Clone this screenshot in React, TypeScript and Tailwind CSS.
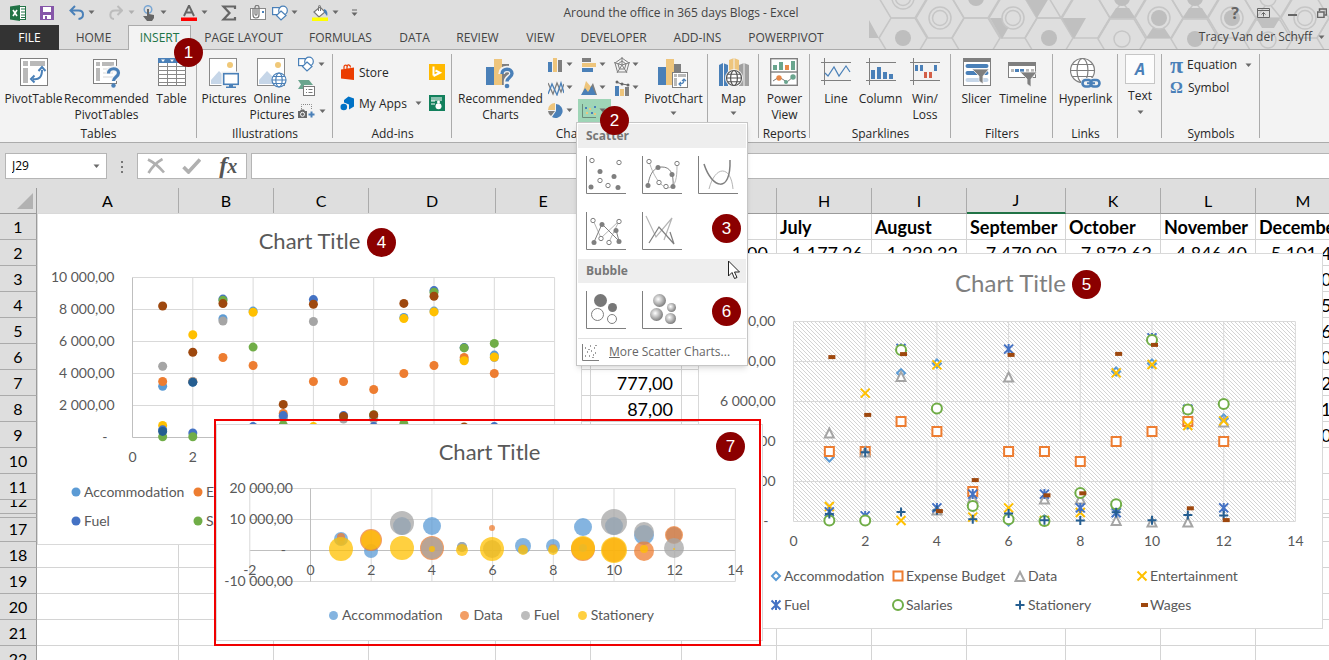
import React from 'react';

interface Series {
  name: string;
  color: string;
  shape: string;
  values: number[];
}

const series: Series[] = [
  { name: 'Accommodation', color: '#5b9bd5', shape: 'diamond', values: [3200, 3450, 7420, 7900, 1300, 0, 100, 1300, 7500, 7900, 4850, 5150] },
  { name: 'Expense Budget', color: '#ed7d31', shape: 'square', values: [3500, 3500, 5000, 4500, 1500, 3500, 3500, 3000, 4000, 4500, 5000, 4000] },
  { name: 'Data', color: '#a5a5a5', shape: 'triangle', values: [4450, 3500, 7280, 600, 1200, 7250, 1150, 1150, 80, 0, 0, 5000] },
  { name: 'Entertainment', color: '#ffc000', shape: 'cross', values: [750, 6420, 50, 7830, 220, 680, 50, 450, 7430, 7850, 4800, 5030] },
  { name: 'Fuel', color: '#4472c4', shape: 'star', values: [480, 280, 8650, 680, 1370, 8620, 1370, 680, 440, 9180, 5620, 680] },
  { name: 'Salaries', color: '#70ad47', shape: 'circle', values: [50, 50, 8580, 5650, 780, 110, 20, 1420, 860, 9080, 5600, 5880] },
  { name: 'Stationery', color: '#255e91', shape: 'plus', values: [380, 3460, 480, 560, 110, 400, 60, 50, 460, 60, 320, 300] },
  { name: 'Wages', color: '#9e480e', shape: 'dash', values: [8220, 5330, 8370, 520, 2070, 8330, 1310, 1410, 8380, 8830, 660, 70] },
];

// x, y and radius of every bubble, in plot pixels
const bubbles = [
  { name: 'Accommodation', color: '#5b9bd5', points: [[125, 115, 7], [155, 127, 7], [186, 102, 9], [216, 102, 9], [246, 123, 5], [307, 122, 8], [337, 122, 7], [367, 103, 9], [398, 102, 9], [428, 111, 10], [458, 111, 8]] },
  { name: 'Data', color: '#ed7d31', points: [[125, 113, 4], [155, 116, 11], [216, 124, 12], [276, 104, 3], [337, 124, 4], [367, 125, 12], [398, 126, 12], [428, 127, 10], [458, 111, 9]] },
  { name: 'Fuel', color: '#a5a5a5', points: [[125, 117, 4], [186, 99, 12], [216, 124, 11], [246, 123, 5], [276, 125, 9], [307, 124, 4], [337, 124, 4], [367, 124, 4], [398, 98, 13], [428, 108, 10], [458, 124, 10]] },
  { name: 'Stationery', color: '#ffc000', points: [[125, 125, 12], [155, 116, 10], [186, 124, 12], [216, 125, 3], [246, 126, 6], [276, 125, 12], [307, 126, 5], [337, 126, 5], [367, 124, 12], [398, 126, 13], [428, 125, 4], [458, 125, 1]] },
];

const tabs = [
  { name: 'FILE', cls: 'w-[59px] bg-[#333333] text-white' },
  { name: 'HOME', cls: 'w-[69px]' },
  { name: 'INSERT', cls: 'w-[63px] bg-[#f3f3f3] text-[#217346] border border-b-0 border-[#ababab]' },
  { name: 'PAGE LAYOUT', cls: 'w-[105px]' },
  { name: 'FORMULAS', cls: 'w-[89px]' },
  { name: 'DATA', cls: 'w-[59px]' },
  { name: 'REVIEW', cls: 'w-[67px]' },
  { name: 'VIEW', cls: 'w-[59px]' },
  { name: 'DEVELOPER', cls: 'w-[87px]' },
  { name: 'ADD-INS', cls: 'w-[81px]' },
  { name: 'POWERPIVOT', cls: 'w-[96px]' },
];

const columns = [
  { name: 'A', w: 142 }, { name: 'B', w: 95 }, { name: 'C', w: 95 }, { name: 'D', w: 127 },
  { name: 'E', w: 95 }, { name: 'F', w: 91 }, { name: 'G', w: 95 }, { name: 'H', w: 95 },
  { name: 'I', w: 95 }, { name: 'J', w: 99 }, { name: 'K', w: 95 }, { name: 'L', w: 95 }, { name: 'M', w: 95 },
];

const cells: Record<string, string> = {
  B1: 'January', C1: 'February', D1: 'March', E1: 'April', F1: 'May', G1: 'June', H1: 'July',
  I1: 'August', J1: 'September', K1: 'October', L1: 'November', M1: 'December',
  G2: '1 250,00', H2: '1 177,26', I2: '1 239,22', J2: '7 479,00', K2: '7 872,63', L2: '4 846,40', M2: '5 101,40',
  F7: '777,00', F8: '87,00',
  M3: '4 000,00', M4: '4 980,50', M5: '5 030,60', M6: '670,00', M7: '5 860,20', M8: '310,10', M9: '70,00',
};

const rows = ['1', '2', '3', '4', '5', '6', '7', '8', '9', '10', '11', '12', '', '17', '18', '19', '20', '21', '22'];

const rowHeight = (r: string) => {
  if (r === '12') return 'h-[13px]';
  if (r === '') return 'h-[3px]';
  if (r === '17') return 'h-[23px]';
  return 'h-[25px]';
};

const Arrow = ({ className = '' }: { className?: string }) => (
  <svg className={`w-[7px] h-[5px] shrink-0 ${className}`} viewBox="0 0 7 5"><path d="M0.5 0.5h6L3.5 4z" fill="#6a6a6a" /></svg>
);

const Badge = ({ n, className }: { n: number; className: string }) => (
  <span className={`absolute z-40 w-[29px] h-[29px] rounded-full bg-[#8b0000] text-white text-[17px] leading-[29px] text-center font-['Liberation_Sans',sans-serif] ${className}`}>{n}</span>
);

/* ---------- icons ---------- */

const ShapesIcon = () => (
  <svg className="w-4 h-4" viewBox="0 0 16 16" fill="#fff" stroke="#4a80b8" strokeWidth="1.2">
    <rect x="0.6" y="2.6" width="8" height="7" />
    <circle cx="11" cy="5.5" r="4.3" />
    <path d="M9 6l5 4.5-5 4.5-4.5-4.5z" />
  </svg>
);

const PivotTableIcon = () => (
  <svg width="28" height="28" viewBox="0 0 28 28">
    <rect x="0.5" y="0.5" width="27" height="27" fill="#fff" stroke="#7f7f7f" />
    <path d="M3 3h5v5H3zM10 3h15v5H10zM3 10h5v15H3z" fill="#b9b9b9" />
    <path d="M13 21c6 1 9-2 9-9" fill="none" stroke="#4a80b8" strokeWidth="2" />
    <path d="M18.500 13l3.500-4 3.500 4M14.500 17.500L11 21l3.500 3.500" fill="none" stroke="#4a80b8" strokeWidth="2" />
  </svg>
);

const RecPivotIcon = () => (
  <svg width="28" height="30" viewBox="0 0 28 30">
    <rect x="0.5" y="1.500" width="23" height="24" fill="#fff" stroke="#7f7f7f" />
    <path d="M3 4h4v4H3zM9 4h12v4H9zM3 10h4v13H3z" fill="#b9b9b9" />
    <path d="M10 11h10M10 15h10M10 19h10" stroke="#d5d5d5" />
    <path d="M15.500 15.500c0-7 10.500-6.500 10.500-.5 0 4-5 4-5 8" fill="none" stroke="#f3f3f3" strokeWidth="6" />
    <path d="M15.500 15.500c0-6.500 10-6 10-.5 0 4-5 4-5 8" fill="none" stroke="#4a80b8" strokeWidth="3.200" />
    <circle cx="20.500" cy="27.500" r="2.200" fill="#4a80b8" />
  </svg>
);

const TableIcon = () => (
  <svg width="28" height="28" viewBox="0 0 28 28">
    <rect x="0.5" y="0.5" width="27" height="27" fill="#fff" stroke="#7f7f7f" />
    <path d="M0 0h28v5H0z" fill="#4a80b8" />
    <path d="M3 1.500h4L5 4zM12 1.500h4L14 4zM21 1.500h4L23 4z" fill="#fff" />
    <path d="M0 8.500h28M0 12.500h28M0 16.500h28M0 20.500h28M0 24.500h28M9.500 5v23M18.500 5v23" stroke="#8a8a8a" />
  </svg>
);

const PictureBase = () => (
  <>
    <rect x="0.5" y="0.5" width="27" height="27" fill="#fff" stroke="#8a8a8a" />
    <circle cx="21" cy="7" r="3" fill="#f0c878" />
    <path d="M2 26V22l8-9 9 9v4z" fill="#c6d6e8" />
  </>
);

const PicturesIcon = () => (
  <svg width="30" height="30" viewBox="0 0 30 30">
    <PictureBase />
    <rect x="14" y="15" width="15.500" height="11.500" fill="#fff" stroke="#f3f3f3" strokeWidth="3" />
    <rect x="14.700" y="15.700" width="14.600" height="10.600" fill="#fff" stroke="#4a80b8" strokeWidth="1.600" />
    <path d="M20 27h4v1.500h3V30H17v-1.500h3z" fill="#4a80b8" />
  </svg>
);

const Globe = ({ cx, cy, r, color }: { cx: number; cy: number; r: number; color: string }) => (
  <g fill="none" stroke={color} strokeWidth="1.200">
    <circle cx={cx} cy={cy} r={r} fill="#fff" />
    <ellipse cx={cx} cy={cy} rx={r / 2.200} ry={r} />
    <path d={`M${cx - r} ${cy}h${2 * r}M${cx - r * 0.85} ${cy - r / 2}h${r * 1.7}M${cx - r * 0.85} ${cy + r / 2}h${r * 1.7}`} />
  </g>
);

const OnlineIcon = () => (
  <svg width="30" height="30" viewBox="0 0 30 30">
    <PictureBase />
    <Globe cx={22} cy={22} r={7} color="#4a80b8" />
  </svg>
);

const SmartArtIcon = () => (
  <svg width="17" height="17" viewBox="0 0 17 17">
    <path d="M0 1h11l4 5h-9v4H0l3-4.500z" fill="#6aa58e" />
    <rect x="5.500" y="7.500" width="11" height="9" fill="#fff" stroke="#7a7a7a" />
    <path d="M8 10.500h1M10.500 10.500h4M8 13.500h1M10.500 13.500h4" stroke="#7a7a7a" />
  </svg>
);

const ScreenshotIcon = () => (
  <svg width="17" height="16" viewBox="0 0 17 16">
    <path d="M3.500 6V1.500h10V7" fill="none" stroke="#888" strokeDasharray="1 1" />
    <path d="M0 8h2l1-1.500h3L7 8h2v7H0z" fill="#6a6a6a" />
    <circle cx="4.500" cy="11.300" r="2" fill="none" stroke="#fff" />
    <path d="M13.500 8.500v6M10.500 11.500h6" stroke="#4a80b8" strokeWidth="2" />
  </svg>
);

const StoreIcon = () => (
  <svg width="15" height="17" viewBox="0 0 15 17">
    <path d="M1 5.500L14 3.500V16L1 14.500z" fill="#eb3c00" />
    <path d="M4 5V3c0-2.500 3-2.500 3.500 0M7 5V2.500c0-2.500 3.500-2 3.500 1" fill="none" stroke="#eb3c00" strokeWidth="1.200" />
  </svg>
);

const AppsIcon = () => (
  <svg width="15" height="15" viewBox="0 0 15 15">
    <path d="M4 4l4.500-3.500L14 2.500v8L9 13.500V8.500L4 6.500z" fill="#0072c6" />
    <circle cx="3.800" cy="11" r="3.300" fill="#0072c6" />
  </svg>
);

const BingIcon = () => (
  <svg width="16" height="16" viewBox="0 0 16 16">
    <path d="M0 0h16v16H0z" fill="#ffb900" />
    <path d="M4.500 2.500v9M4.500 12l6.500-3.300L6.500 6.500" fill="none" stroke="#fff" strokeWidth="2" />
  </svg>
);

const PeopleGraphIcon = () => (
  <svg width="16" height="16" viewBox="0 0 16 16">
    <path d="M0 0h16v16H0z" fill="#12805c" />
    <path d="M2 3h11M2 6h4M2 9h4M2 5h11" stroke="#fff" />
    <circle cx="9.500" cy="7" r="1.500" fill="#fff" />
    <circle cx="9.500" cy="11.300" r="3" fill="#fff" />
  </svg>
);

const Bars = () => (
  <>
    <path d="M0 9h8v18H0z" fill="#4a80b8" />
    <path d="M8 1h8v26H8z" fill="#eec57c" />
    <path d="M16 6h7v21h-7z" fill="#7f7f7f" />
  </>
);

const RecChartsIcon = () => (
  <svg width="30" height="31" viewBox="0 0 30 31">
    <Bars />
    <path d="M15.500 16c0-7 11-6.500 11-.5 0 4-5.500 4-5.500 8v5" fill="none" stroke="#f3f3f3" strokeWidth="6.500" />
    <path d="M16 16c0-6.500 10-6 10-.5 0 4-5 4-5 8" fill="none" stroke="#4a80b8" strokeWidth="3.400" />
    <circle cx="21" cy="28" r="2.300" fill="#4a80b8" />
  </svg>
);

const PivotChartIcon = () => (
  <svg width="31" height="31" viewBox="0 0 31 31">
    <Bars />
    <rect x="14.500" y="14.500" width="15" height="15" fill="#fff" stroke="#7f7f7f" />
    <path d="M16 16h3v3h-3zM20 16h8v3h-8zM16 20h3v8h-3z" fill="#b9b9b9" />
    <path d="M21.500 26c3 0 4.500-1 4.500-4M24 23l2-2 2 2M23 24l-2 2 2 2" fill="none" stroke="#4a80b8" strokeWidth="1.200" />
  </svg>
);

const MapIcon = () => (
  <svg width="30" height="29" viewBox="0 0 30 29">
    <path d="M0 7l4-2 5 2v21H0z" fill="#4a80b8" />
    <path d="M10 2l5-2 5 2v20H10z" fill="#eec57c" />
    <path d="M20 7l5-2 5 2v21H20z" fill="#a0a0a0" />
    <path d="M4.500 5v23M25 5v23M15 0v12" stroke="#f3f3f3" />
    <circle cx="15" cy="20" r="9" fill="#f3f3f3" />
    <Globe cx={15} cy={20} r={7.5} color="#555" />
  </svg>
);

const PowerViewIcon = () => (
  <svg width="28" height="28" viewBox="0 0 28 28">
    <rect x="0.700" y="0.700" width="26.600" height="26.600" fill="#fff" stroke="#7f7f7f" strokeWidth="1.400" />
    <path d="M0 14h28" stroke="#7f7f7f" strokeWidth="1.400" />
    <path d="M3 7h4v5H3zM9 4h4v8H9zM21 3h4v9h-4z" fill="#6aa58e" />
    <path d="M15 7h4v5h-4z" fill="#e8894a" />
    <path d="M3 23l6-4 8 5 6-5" fill="none" stroke="#777" />
    <circle cx="9" cy="20" r="2.700" fill="#e8894a" />
    <circle cx="16" cy="24" r="2" fill="#6aa58e" />
    <circle cx="23" cy="19" r="2.700" fill="#6aa58e" />
  </svg>
);

const SparkAxes = () => <path d="M0 4.500h30M0 22.500h30M3.500 0v27" stroke="#7f7f7f" fill="none" />;

const LineIcon = () => (
  <svg width="30" height="27" viewBox="0 0 30 27">
    <SparkAxes />
    <path d="M4 15l3 3 6-9 5 9 7-10 4 6" fill="none" stroke="#4a80b8" strokeWidth="1.200" />
  </svg>
);

const ColumnIcon = () => (
  <svg width="30" height="27" viewBox="0 0 30 27">
    <SparkAxes />
    <path d="M5 12h4v9H5zM11 9h4v12h-4zM17 14h4v7h-4zM23 16h4v5h-4z" fill="#4a80b8" />
  </svg>
);

const WinLossIcon = () => (
  <svg width="30" height="27" viewBox="0 0 30 27">
    <SparkAxes />
    <path d="M5 7h3v6H5zM10 7h3v6h-3zM24 7h3v6h-3z" fill="#4a80b8" />
    <path d="M14 14h3v6h-3zM19 14h3v6h-3z" fill="#d35f48" />
  </svg>
);

const Funnel = ({ x, y }: { x: number; y: number }) => (
  <path d={`M${x} ${y}h17l-6 7v8l-4-3v-5z`} fill="#7f7f7f" stroke="#f3f3f3" strokeWidth="0.800" />
);

const SlicerIcon = () => (
  <svg width="28" height="28" viewBox="0 0 28 28">
    <rect x="0.500" y="0.500" width="27" height="27" fill="#fff" stroke="#7f7f7f" />
    <path d="M0 0h28v4H0z" fill="#7f7f7f" />
    <path d="M4.500 8h19M4.500 15h19" stroke="#4a80b8" strokeWidth="4" strokeLinecap="round" />
    <path d="M4.500 22h19" stroke="#c6d6e8" strokeWidth="4" strokeLinecap="round" />
    <Funnel x={9} y={11} />
  </svg>
);

const TimelineIcon = () => (
  <svg width="30" height="30" viewBox="0 0 30 30">
    <rect x="0.500" y="4.500" width="27" height="15" fill="#fff" stroke="#7f7f7f" />
    <path d="M0 4h28v4H0z" fill="#7f7f7f" />
    <path d="M3 12.500h3M18 12.500h3M23 12.500h3" stroke="#b9b9b9" strokeWidth="3" />
    <path d="M7 12.500h4M12 12.500h4" stroke="#4a80b8" strokeWidth="3" />
    <Funnel x={12} y={14} />
  </svg>
);

const HyperlinkIcon = () => (
  <svg width="31" height="31" viewBox="0 0 31 31">
    <Globe cx={12.5} cy={12.5} r={12} color="#7f7f7f" />
    <rect x="11" y="20" width="20" height="11" fill="#f3f3f3" />
    <rect x="12.500" y="22" width="9" height="6.500" rx="3.200" fill="none" stroke="#4a80b8" strokeWidth="2.600" />
    <rect x="20.500" y="22" width="9" height="6.500" rx="3.200" fill="none" stroke="#4a80b8" strokeWidth="2.600" />
    <path d="M17 25.200h8" stroke="#4a80b8" strokeWidth="2" />
  </svg>
);

const chartIcons = [
  <g key="col"><path d="M0 5h4v10H0z" fill="#4a80b8" /><path d="M5 1h4v14H5z" fill="#eec57c" /><path d="M10 3h4v12h-4z" fill="#7f7f7f" /></g>,
  <g key="bar"><path d="M1 1h9v4H1z" fill="#7f7f7f" /><path d="M1 6h14v4H1z" fill="#eec57c" /><path d="M1 11h11v4H1z" fill="#4a80b8" /></g>,
  <g key="radar" fill="none" stroke="#7f7f7f"><path d="M8 1l7 5-2.500 9h-9L1 6z" /><path d="M8 4l4 3-1.500 5h-5L4 7z" /><path d="M8 0v8L0 5.500M8 8l8-2.500M8 8l-5 8M8 8l5 8" /></g>,
  <g key="line" fill="none" strokeWidth="1.300"><path d="M0 3l5 11 4-11 4 9 3-8" stroke="#7f7f7f" /><path d="M0 14l4-10 5 11 4-12 3 10" stroke="#4a80b8" /></g>,
  <g key="area"><path d="M1 15l4-14 6 7 4 7z" fill="#eec57c" /><path d="M9 8l3-5 4 12h-5z" fill="#7f7f7f" /><path d="M0 15l4-7 3 4 4-6 4 9z" fill="#4a80b8" /></g>,
  <g key="combo"><path d="M1 6h4v10H1z" fill="#4a80b8" /><path d="M6 9h4v7H6z" fill="#eec57c" /><path d="M11 7h4v9h-4z" fill="#7f7f7f" /><path d="M2 2l6 2 6 1" fill="none" stroke="#666" /><circle cx="3" cy="2" r="1.500" fill="#666" /><circle cx="8" cy="4" r="1.500" fill="#666" /><circle cx="14" cy="5" r="1.500" fill="#666" /></g>,
  <g key="pie"><path d="M7 7V0a7 7 0 0 0-7 7z" fill="#eec57c" /><path d="M8 8V1a7 7 0 1 1-4 13z" fill="#4a80b8" /><path d="M7 8H0a7 7 0 0 0 3 5z" fill="#7f7f7f" /></g>,
  <g key="scatter"><path d="M1.500 1v13.500H15" fill="none" stroke="#6a8c7a" /><path d="M4 4h2v2H4zM10 9h2v2h-2zM13 3h2v2h-2z" fill="#4a80b8" /><path d="M8 5h2v2H8zM5 9h2v2H5zM13 10h2v2h-2z" fill="#eec57c" /></g>,
];

/* ---------- ribbon ---------- */

interface BigButtonProps {
  label: string;
  icon: React.ReactNode;
  className?: string;
  arrow?: boolean;
}

const BigButton = ({ label, icon, className = '', arrow }: BigButtonProps) => (
  <button className={`flex flex-col items-center shrink-0 ${className}`}>
    <span className="h-[33px] flex items-start justify-center">{icon}</span>
    <span className="leading-4 text-center whitespace-pre">{label}</span>
    {arrow && <Arrow className="mt-1" />}
  </button>
);

const Group = ({ label, className, children }: { label: string; className: string; children: React.ReactNode }) => (
  <section className={`flex flex-col shrink-0 relative ${className}`}>
    <div className="flex-1 flex justify-center items-start pt-2">{children}</div>
    <div className="h-4 leading-4 text-center">{label}</div>
    <span className="absolute right-0 top-1 bottom-1 w-px bg-[#ababab]" />
  </section>
);

const Ribbon = () => (
  <div className="flex h-[93px] bg-[#f3f3f3] border-b border-[#ababab] text-xs text-[#262626] overflow-hidden">
    <Group label="Tables" className="w-[197px]">
      <BigButton label="PivotTable" icon={<PivotTableIcon />} className="w-[60px]" />
      <BigButton label={'Recommended\nPivotTables'} icon={<RecPivotIcon />} className="w-[86px]" />
      <BigButton label="Table" icon={<TableIcon />} className="w-[44px]" />
    </Group>
    <Group label="Illustrations" className="w-[136px]">
      <BigButton label="Pictures" icon={<PicturesIcon />} className="w-[48px]" />
      <BigButton label={'Online\nPictures'} icon={<OnlineIcon />} className="w-[48px]" />
      <div className="flex flex-col gap-[7px] -mt-2 pt-1.5 pl-0.5 pr-1">
        <button aria-label="Shapes" className="flex items-center gap-1"><ShapesIcon /><Arrow /></button>
        <button aria-label="SmartArt"><SmartArtIcon /></button>
        <button aria-label="Screenshot" className="flex items-center gap-1"><ScreenshotIcon /><Arrow /></button>
      </div>
    </Group>
    <Group label="Add-ins" className="w-[119px]">
      <div className="flex flex-col gap-[14px] w-[89px] pt-1.5">
        <button className="flex items-center gap-1 h-[17px]"><StoreIcon />Store</button>
        <button className="flex items-center gap-1 h-[17px]"><AppsIcon />My Apps<Arrow className="ml-1" /></button>
      </div>
      <div className="flex flex-col gap-[15px] pt-1.5">
        <button aria-label="Bing Maps"><BingIcon /></button>
        <button aria-label="People Graph"><PeopleGraphIcon /></button>
      </div>
    </Group>
    <Group label="Charts" className="w-[256px] [&>div:nth-child(2)]:pr-3">
      <BigButton label={'Recommended\nCharts'} icon={<RecChartsIcon />} className="w-[88px]" />
      <div className="grid grid-cols-[33px_33px_33px] auto-rows-[23px] -mt-[5px]">
        {chartIcons.map((icon, i) => (
          <button key={i} aria-label="Insert chart" className={`flex items-center gap-0.5 pl-[3px] ${i === 7 ? 'bg-[#9fd5b7]' : ''}`}>
            <svg width="16" height="16" viewBox="0 0 16 16">{icon}</svg>
            <Arrow />
          </button>
        ))}
      </div>
      <BigButton label="PivotChart" icon={<PivotChartIcon />} className="w-[60px]" arrow />
    </Group>
    <Group label="Tours" className="w-[51px] [&>div:nth-child(2)]:pr-1">
      <BigButton label="Map" icon={<MapIcon />} arrow />
    </Group>
    <Group label="Reports" className="w-[51px]">
      <BigButton label={'Power\nView'} icon={<PowerViewIcon />} />
    </Group>
    <Group label="Sparklines" className="w-[141px]">
      <BigButton label="Line" icon={<LineIcon />} className="w-[42px]" />
      <BigButton label="Column" icon={<ColumnIcon />} className="w-[47px]" />
      <BigButton label={'Win/\nLoss'} icon={<WinLossIcon />} className="w-[42px]" />
    </Group>
    <Group label="Filters" className="w-[102px]">
      <BigButton label="Slicer" icon={<SlicerIcon />} className="w-[42px]" />
      <BigButton label="Timeline" icon={<TimelineIcon />} className="w-[51px]" />
    </Group>
    <Group label="Links" className="w-[65px]">
      <BigButton label="Hyperlink" icon={<HyperlinkIcon />} />
    </Group>
    <Group label="" className="w-[44px]">
      <button className="flex flex-col items-center gap-1 -mt-1">
        <span className="w-[30px] h-[30px] bg-[#fcfcfc] border border-[#c6c6c6] text-[#4a80b8] text-base font-bold italic leading-7">A</span>
        <span className="leading-4">Text</span>
        <Arrow className="mt-0.5" />
      </button>
    </Group>
    <Group label="Symbols" className="w-[98px]">
      <div className="flex flex-col gap-[3px] w-[82px] -mt-[3px]">
        <button className="flex items-center h-5 whitespace-nowrap"><span className="w-[18px] text-left text-2xl leading-5 font-bold text-[#4a80b8] font-['Liberation_Serif',serif]">π</span>Equation<Arrow className="ml-2" /></button>
        <button className="flex items-center h-5"><span className="w-[18px] text-left text-base leading-5 font-bold text-[#4a80b8] font-['Liberation_Serif',serif]">Ω</span>Symbol</button>
      </div>
    </Group>
  </div>
);

/* ---------- title bar ---------- */

// honeycomb cells, [centre x, centre y, kind]
const nodes: [number, number, string][] = [
  [903, 38, 'solid'], [940, 18, 'ring'], [903, -2, 'ring'], [976, -2, 'solid'], [976, 38, 'none'],
  [1013, 18, 'ring'], [1049, -2, 'none'], [1049, 38, 'solid'], [1086, 18, 'none'], [1122, -2, 'solid'],
  [1122, 39, 'open'], [1159, 18, 'both'], [1195, -2, 'solid'], [1195, 39, 'solid'], [1232, 18, 'both'],
  [1268, -2, 'open'], [1268, 40, 'open'], [1305, 18, 'ring'], [1341, 38, 'none'],
];

const Circuit = () => (
  <svg className="absolute right-0 top-0 w-[460px] h-[49px]" viewBox="869 0 460 49" fill="none" stroke="#c6c6c6" strokeWidth="1.500">
    {nodes.map(([x, y]) => (
      <path key={`${x},${y}`} d={`M${x - 24} ${y}l12-20h24l12 20-12 20h-24z`} />
    ))}
    <path d="M1061 18l-12-20M1110 18l12-16 13 16M1183 18l12-16 13 16M1256 18l12-16 13 16M1098 38l12-20M1037 18h24" />
    <path d="M990 18h24l-12 21zM1062 18h24l-12 21zM1025 -2h24l-12 20zM1116 8h13l6 10h-25zM1189 8h13l6 10h-25zM1262 28l12 0 6-10h-24zM1146 38h25l-8-12h-9zM869 20l10 18h-10z" fill="#c0c0c0" stroke="none" />
    {nodes.filter((n) => n[2] !== 'none').map(([x, y, kind]) => (
      <g key={`${x},${y}`}>
        {kind !== 'solid' && <circle cx={x} cy={y} r={kind === 'open' ? 8 : 11} fill="#dedede" />}
        {kind === 'ring' && <circle cx={x} cy={y} r="7.500" />}
        {(kind === 'solid' || kind === 'both') && <circle cx={x} cy={y} r="8" fill="#bebebe" stroke="none" />}
      </g>
    ))}
  </svg>
);

const QuickAccess = () => (
  <div className="flex items-center w-[365px] shrink-0">
    <svg className="ml-[10px] w-4 h-4" viewBox="0 0 16 16">
      <rect x="8.500" y="1.500" width="7" height="13" fill="#fff" stroke="#217346" />
      <path d="M11 4h4M11 7h4M11 10h4M11 12.500h4" stroke="#217346" />
      <path d="M0 1.500L10 0v16L0 14.500z" fill="#217346" />
      <path d="M3 5l4 6M7 5l-4 6" stroke="#fff" strokeWidth="1.600" />
    </svg>
    <button aria-label="Save" className="ml-[14px]">
      <svg className="w-[14px] h-[14px]" viewBox="0 0 14 14"><path d="M0 0h14v14H0z" fill="#8656a9" /><path d="M3 1h8v5H3zM3 9h8v4H3z" fill="#fff" /><path d="M5 10h2v3H5z" fill="#8656a9" /></svg>
    </button>
    <button aria-label="Undo" className="ml-[15px]">
      <svg className="w-4 h-4" viewBox="0 0 16 16" fill="none" stroke="#4a80b8" strokeWidth="2"><path d="M6 1L1.500 5.500 6 10M1.500 5.500h8c6 0 6 8 0 8.500" /></svg>
    </button>
    <Arrow className="ml-[3px]" />
    <button aria-label="Redo" className="ml-[14px]">
      <svg className="w-[14px] h-4" viewBox="0 0 14 16" fill="none" stroke="#bcbcbc" strokeWidth="2"><path d="M8.500 1L13 5.500 8.500 10M13 5.500H6c-6 0-6 8-1 8.500" /></svg>
    </button>
    <Arrow className="ml-[5px] opacity-40" />
    <button aria-label="Touch mode" className="ml-[7px]">
      <svg className="w-[14px] h-4" viewBox="0 0 14 16"><circle cx="6" cy="4.500" r="3.800" fill="none" stroke="#7aa7d4" strokeWidth="1.500" /><path d="M5 4h2v5l5 1v3l-2 3H5l-4-5h4z" fill="#666" /></svg>
    </button>
    <Arrow className="ml-1" />
    <button aria-label="Font color" className="ml-[14px]">
      <svg className="w-4 h-4" viewBox="0 0 16 16"><path d="M3 11L8 0.500 13 11M5 7.500h6" fill="none" stroke="#666" strokeWidth="1.900" /><path d="M0 12.500h16v3.500H0z" fill="#f00" /></svg>
    </button>
    <Arrow className="ml-1" />
    <button aria-label="AutoSum" className="ml-[13px]">
      <svg className="w-4 h-4" viewBox="0 0 16 16"><path d="M14 4V1.500H2.500L8.500 8l-6 6.500H14V12" fill="none" stroke="#666" strokeWidth="2.200" /></svg>
    </button>
    <button aria-label="Attach file" className="ml-[13px]">
      <svg className="w-4 h-4" viewBox="0 0 16 16"><rect x="0.500" y="3.500" width="15" height="11" fill="#fff" stroke="#888" /><path d="M3 3v7c0 4 6 4 6 0V2.500c0-3-4-3-4 0V9c0 1.500 2 1.500 2 0V4" fill="none" stroke="#777" strokeWidth="1.200" /><path d="M12 6h2v2h-2z" fill="#4a80b8" /></svg>
    </button>
    <button aria-label="Shapes" className="ml-1.5"><ShapesIcon /></button>
    <Arrow className="ml-[3px]" />
    <button aria-label="Fill color" className="ml-[14px]">
      <svg className="w-4 h-4" viewBox="0 0 16 16"><path d="M2 7l6-5 5 5-6 5z" fill="#fff" stroke="#777" strokeWidth="1.200" /><path d="M6.500 6V1.500c0-1.500 2-1.500 2 0V6" fill="none" stroke="#777" /><path d="M12 4c3 1 4 4 3 7l-3-4z" fill="#4a80b8" /><path d="M0 12.500h16v3.500H0z" fill="#ff0" /></svg>
    </button>
    <Arrow className="ml-1" />
    <svg className="ml-3 w-[7px] h-2 shrink-0" viewBox="0 0 7 8"><path d="M1 1h5" stroke="#666" /><path d="M0.500 3.500h6L3.500 7z" fill="#666" /></svg>
  </div>
);

const TitleBar = () => (
  <header className="relative bg-[#dedede] text-xs text-[#444444]">
    <Circuit />
    <div className="relative flex h-[25px] items-center">
      <QuickAccess />
      <h1 className="flex-1 text-center whitespace-nowrap">Around the office in 365 days Blogs - Excel</h1>
      <div className="w-[332px] shrink-0 flex justify-end items-center text-[#666]">
        <button className="text-base leading-5 font-bold mr-[18px]">?</button>
        <button aria-label="Ribbon display options" className="mr-[18px]">
          <svg width="13" height="10" viewBox="0 0 13 10" fill="none" stroke="#666"><path d="M0.500 0.500h12v9H0.500zM0.500 2.500h12M6.500 8.500v-4M4.500 6.500l2-2 2 2" /></svg>
        </button>
        <button aria-label="Minimize" className="mr-[20px]">
          <svg width="9" height="10" viewBox="0 0 9 10"><path d="M0 7h9" stroke="#666" strokeWidth="2" /></svg>
        </button>
        <button aria-label="Restore" className="mr-0.5">
          <svg width="10" height="10" viewBox="0 0 10 10" fill="none" stroke="#666"><path d="M2.500 3V1h7v6H7.500" strokeWidth="1.500" /><path d="M0.500 4h6.500v5.500H0.500z" strokeWidth="1.500" /></svg>
        </button>
      </div>
    </div>
    <nav className="relative flex h-[25px] border-b border-[#ababab]">
      {tabs.map((tab) => (
        <button key={tab.name} className={`h-[25px] leading-6 text-center shrink-0 ${tab.cls}`}>{tab.name}</button>
      ))}
      <button className="ml-auto flex items-center gap-1.5 pr-1 whitespace-nowrap">Tracy Van der Schyff<Arrow /></button>
    </nav>
  </header>
);

const FormulaBar = () => (
  <div className="flex items-start gap-1 h-[45px] pt-[10px] pl-[5px] bg-[#dedede] text-xs">
    <div className="flex items-center justify-between w-[102px] h-[26px] bg-white border border-[#b5b5b5] pl-1.5 pr-[6px]">
      <input aria-label="Name box" defaultValue="J29" className="w-14 text-black outline-none" />
      <Arrow />
    </div>
    <svg className="mx-[5px] mt-2 w-3 h-3" viewBox="0 0 12 12" fill="#777"><path d="M5 0h2v2H5zM5 5h2v2H5zM5 10h2v2H5z" /></svg>
    <div className="flex items-center justify-around w-[110px] h-[26px] bg-white border border-[#b5b5b5]">
      <button aria-label="Cancel"><svg width="18" height="16" viewBox="0 0 18 16"><path d="M1 1.500c6 3 11 7 16 13M15.500 1C10 4 5 9 1.500 15" fill="none" stroke="#b0b0b0" strokeWidth="2.600" /></svg></button>
      <button aria-label="Enter"><svg width="19" height="16" viewBox="0 0 19 16"><path d="M1.500 9l5 5L18 1.500" fill="none" stroke="#b0b0b0" strokeWidth="3.600" /></svg></button>
      <button className="text-2xl leading-6 italic font-bold text-[#555] font-['Liberation_Serif',serif]">f<span className="text-xl">x</span></button>
    </div>
    <input aria-label="Formula" className="flex-1 h-[26px] bg-white border border-r-0 border-[#b5b5b5] outline-none" />
  </div>
);

/* ---------- charts ---------- */

const Marker = ({ shape, color, x, y }: { shape: string; color: string; x: number; y: number }) => {
  const p = { fill: 'none', stroke: color, strokeWidth: 2 };
  switch (shape) {
    case 'diamond': return <path d={`M${x} ${y - 4}l4 4-4 4-4-4z`} {...p} fill="#fff" />;
    case 'square': return <rect x={x - 4.5} y={y - 4.5} width="9" height="9" {...p} fill="#fff" />;
    case 'triangle': return <path d={`M${x} ${y - 4}l4.500 9h-9z`} {...p} fill="#fff" />;
    case 'cross': return <path d={`M${x - 4.5} ${y - 4.5}l9 9m0-9l-9 9`} {...p} />;
    case 'star': return <path d={`M${x - 4.5} ${y - 4.5}l9 9m0-9l-9 9M${x} ${y - 5}v10`} {...p} />;
    case 'circle': return <circle cx={x} cy={y} r="5" {...p} fill="#fff" />;
    case 'plus': return <path d={`M${x - 4.5} ${y}h9M${x} ${y - 4.5}v9`} {...p} />;
    case 'dash': return <rect x={x - 1} y={y - 2} width="7" height="4" fill={color} />;
    default: return <circle cx={x} cy={y} r="4.500" fill={color} />;
  }
};

const xTicks = [0, 2, 4, 6, 8, 10, 12, 14];
const yTicks = [0, 2000, 4000, 6000, 8000, 10000];
const money = (v: number) => (v === 0 ? '-' : `${v < 0 ? '-' : ''}${Math.abs(v) / 1000} 000,00`);

interface ScatterPlotProps {
  x0: number;
  y0: number;
  dx: number;
  dy: number;
  top: number;
  width: number;
  height: number;
  plain?: boolean;
}

// dx: pixels per month, dy: pixels per thousand
const ScatterPlot = ({ x0, y0, dx, dy, top, width, height, plain }: ScatterPlotProps) => {
  const sx = (v: number) => x0 + v * dx;
  const sy = (v: number) => y0 - (v / 1000) * dy;
  return (
    <svg width={width} height={height} viewBox={`1 ${top} ${width} ${height}`} className="shrink-0 text-sm" fill="#595959">
      {!plain && (
        <>
          <defs>
            <pattern id="hatch" width="4" height="4" patternUnits="userSpaceOnUse">
              <path d="M-1 -1l6 6M-1 3l2 2M3 -1l2 2" stroke="#cfcfcf" strokeWidth="0.900" />
            </pattern>
          </defs>
          <rect x={sx(0)} y={sy(10000)} width={14 * dx} height={10 * dy} fill="url(#hatch)" />
        </>
      )}
      {yTicks.map((v) => (
        <React.Fragment key={v}>
          <path d={`M${sx(0)} ${sy(v)}H${sx(14)}`} stroke={v === 0 && plain ? '#bfbfbf' : '#d9d9d9'} />
          <text x={v === 0 ? sx(0) - 25 : sx(0) - 18} y={sy(v) + 4} textAnchor="end">{money(v)}</text>
        </React.Fragment>
      ))}
      {xTicks.map((v) => (
        <React.Fragment key={v}>
          <path d={`M${sx(v)} ${sy(0)}V${sy(10000)}`} stroke={v === 0 && plain ? '#bfbfbf' : '#d9d9d9'} />
          <text x={sx(v)} y={y0 + 24} textAnchor="middle">{v}</text>
        </React.Fragment>
      ))}
      {series.map((s) => s.values.map((v, i) => (
        <Marker key={s.name + i} shape={plain ? 'dot' : s.shape} color={s.color} x={sx(i + 1)} y={sy(v)} />
      )))}
    </svg>
  );
};

const Legend = ({ plain, className }: { plain?: boolean; className: string }) => (
  <ul className={`grid grid-cols-[122px_122px_122px_122px] auto-rows-[29px] items-center text-sm leading-4 ${className}`}>
    {series.map((s) => (
      <li key={s.name} className="flex items-center gap-0.5 whitespace-nowrap">
        <svg className="w-3 h-3 shrink-0" viewBox="0 0 12 12"><Marker shape={plain ? 'dot' : s.shape} color={s.color} x={6} y={6} /></svg>
        {s.name}
      </li>
    ))}
  </ul>
);

const chartBox = 'absolute flex flex-col bg-white border border-[#d9d9d9] text-[#595959] overflow-hidden';

const ScatterChart = () => (
  <figure className={`${chartBox} left-[37px] top-[25px] w-[545px] h-[332px]`}>
    <figcaption className="h-[50px] pt-[3px] text-[22px] leading-[48px] text-center">Chart Title</figcaption>
    <ScatterPlot plain x0={95.5} y0={224.5} dx={30.15} dy={16} top={51} width={543} height={213} />
    <Legend plain className="ml-[32px]" />
  </figure>
);

const StyledScatterChart = () => (
  <figure className={`${chartBox} left-[698px] top-[65px] w-[625px] h-[376px]`}>
    <figcaption className="h-[54px] pt-[3px] text-2xl leading-[52px] text-center text-[#7f7f7f]">Chart Title</figcaption>
    <ScatterPlot x0={95.5} y0={268.5} dx={35.85} dy={20} top={55} width={623} height={253} />
    <Legend className="ml-[71px]" />
  </figure>
);

const BubbleChart = () => {
  const lines = [-2, ...xTicks];
  const sx = (v: number) => 94.5 + v * 30.35;
  const sy = (v: number) => 126.5 - v * 0.0031;
  return (
    <figure className={`${chartBox} left-[216px] top-[236px] w-[547px] h-[217px]`}>
      <figcaption className="h-[52px] pt-[3px] text-[22px] leading-[48px] text-center">Chart Title</figcaption>
      <svg width="545" height="124" viewBox="1 53 545 124" className="shrink-0 text-sm" fill="#595959">
        {[20000, 10000, 0, -10000].map((v) => (
          <path key={v} d={`M${sx(-2)} ${sy(v)}H${sx(14)}`} stroke={v === 0 ? '#bfbfbf' : '#d9d9d9'} />
        ))}
        {lines.map((v) => (
          <path key={v} d={`M${sx(v)} ${sy(-10000)}V${sy(20000)}`} stroke={v === 0 ? '#bfbfbf' : '#d9d9d9'} />
        ))}
        {bubbles.map((b) => b.points.map(([x, y, r]) => (
          <circle key={`${b.name}${x}`} cx={x} cy={y} r={r} fill={b.color} fillOpacity="0.750" />
        )))}
        {[20000, 10000, 0, -10000].map((v) => (
          <text key={v} x={v === 0 ? 70 : 77} y={sy(v) + 4} textAnchor="end">{money(v)}</text>
        ))}
        {lines.map((v) => (
          <text key={v} x={sx(v)} y="151" textAnchor="middle">{v}</text>
        ))}
      </svg>
      <ul className="flex justify-center gap-[18px] mt-1 text-sm leading-5 pl-1">
        {bubbles.map((b) => (
          <li key={b.name} className="flex items-center gap-1">
            <svg className="w-[9px] h-[9px]" viewBox="0 0 9 9"><circle cx="4.500" cy="4.500" r="4.500" fill={b.color} fillOpacity="0.750" /></svg>
            {b.name}
          </li>
        ))}
      </ul>
    </figure>
  );
};

/* ---------- sheet ---------- */

const Sheet = () => (
  <main className="relative flex-1 overflow-hidden bg-white font-[Lato,sans-serif]">
    <table className="table-fixed border-separate border-spacing-0 w-[1351px] text-black">
      <colgroup>
        <col className="w-[37px]" />
        {columns.map((c) => <col key={c.name} style={{ width: c.w }} />)}
      </colgroup>
      <thead>
        <tr className="bg-[#dedede] text-base">
          <th className="h-[26px] p-0 border-b border-r border-[#9b9b9b]">
            <svg className="ml-auto mr-[3px] w-4 h-4" viewBox="0 0 16 16"><path d="M16 0v16H0z" fill="#b2b2b2" /></svg>
          </th>
          {columns.map((c) => (
            <th key={c.name} className={`h-[26px] p-0 font-normal leading-6 border-r border-r-[#ababab] ${c.name === 'J' ? 'border-b-2 border-b-[#217346]' : 'border-b border-b-[#9b9b9b]'}`}>{c.name}</th>
          ))}
        </tr>
      </thead>
      <tbody>
        {rows.map((r) => (
          <tr key={r}>
            <th className="p-0 bg-[#dedede] font-normal text-base border-b border-b-[#ababab] border-r border-r-[#9b9b9b]">
              <div className={`flex items-end justify-center overflow-hidden leading-[25px] ${rowHeight(r)}`}>{r}</div>
            </th>
            {columns.map((c) => {
              const value = cells[c.name + r];
              return (
                <td key={c.name} className="p-0 border-b border-r border-[#d4d4d4]">
                  <div className={`overflow-hidden leading-[26px] whitespace-nowrap text-lg ${rowHeight(r)} ${r === '1' ? 'pl-[3px] font-bold' : 'pr-2 text-right'}`}>{value}</div>
                </td>
              );
            })}
          </tr>
        ))}
      </tbody>
    </table>
    <ScatterChart />
    <StyledScatterChart />
    <BubbleChart />
    <div className="absolute left-[214px] top-[231px] w-[547px] h-[227px] border-2 border-[#f00000]" />
  </main>
);

/* ---------- scatter gallery ---------- */

const Gallery = ({ children }: { children: React.ReactNode }) => (
  <button className="w-10 h-[38px]">
    <svg width="40" height="38" viewBox="0 0 40 38" fill="none" stroke="#7f7f7f">
      {children}
      <path d="M0.500 0v37.500H40" />
    </svg>
  </button>
);

const Dots = ({ solid, hollow }: { solid: number[][]; hollow: number[][] }) => (
  <>
    {solid.map(([x, y]) => <circle key={`${x}-${y}`} cx={x} cy={y} r="2.500" fill="#7f7f7f" stroke="none" />)}
    {hollow.map(([x, y]) => <circle key={`${x}-${y}`} cx={x} cy={y} r="2.200" fill="#fff" />)}
  </>
);

const ScatterMenu = () => (
  <div className="absolute z-30 left-[576px] top-[122px] w-[172px] bg-white border border-[#c6c6c6] shadow-md p-px pb-0 text-xs text-[#777777]">
    <h2 className="h-6 leading-6 pl-2 bg-[#eeeeee] font-bold">Scatter</h2>
    <div className="grid grid-cols-[40px_40px_40px] gap-x-4 gap-y-[18px] pl-2 pt-2 pb-[9px]">
      <Gallery><Dots solid={[[14, 15.5], [28, 20.5], [5, 31], [32, 31.500]]} hollow={[[6, 4.5], [33, 6.5], [14, 24.5], [22, 29.500]]} /></Gallery>
      <Gallery>
        <path d="M7 5c5 18 15 30 22 26 6-3 6-14 6-24" stroke="#b5b5b5" />
        <path d="M6 29C8 15 14 11 20 11c8 0 12 6 11 20" />
        <Dots solid={[[6, 29.5], [16, 11.5], [30, 18.5], [31, 30.500]]} hollow={[[7, 5.5], [35, 7.5], [17, 26.5], [24, 30.500]]} />
      </Gallery>
      <Gallery>
        <path d="M11 33c6-24 22-24 24 0" stroke="#b5b5b5" />
        <path d="M6 8c8 25 27 30 26-4" strokeWidth="1.500" />
      </Gallery>
      <Gallery>
        <path d="M7 8l8 18L33 9 23 30" stroke="#b5b5b5" />
        <path d="M8 30l8-18 17 17-3-11" />
        <Dots solid={[[8, 30.5], [16, 12.5], [33, 29.5], [30, 18.500]]} hollow={[[7, 8.5], [33, 9.5], [15, 26.5], [23, 30.500]]} />
      </Gallery>
      <Gallery>
        <path d="M4 4l10 21L30 6l-8 22" stroke="#b5b5b5" strokeWidth="1.200" />
        <path d="M7 31l10-16 15 17-4-12" strokeWidth="1.200" />
      </Gallery>
    </div>
    <h2 className="h-6 leading-[23px] pl-2 bg-[#eeeeee] font-bold">Bubble</h2>
    <div className="grid grid-cols-[40px_40px] gap-x-4 pl-2 pt-2 pb-[9px]">
      <Gallery>
        <circle cx="14.500" cy="9.500" r="6.500" fill="#777" stroke="none" />
        <circle cx="26.500" cy="16.500" r="4.500" fill="#777" stroke="none" />
        <circle cx="11.500" cy="23.500" r="6" /><circle cx="26" cy="28" r="4.500" />
      </Gallery>
      <Gallery>
        <defs><radialGradient id="ball" cx="0.400" cy="0.400" r="0.600"><stop offset="0" stopColor="#fff" /><stop offset="1" stopColor="#808080" /></radialGradient></defs>
        <g fill="url(#ball)" stroke="none"><circle cx="17.500" cy="9.500" r="6.500" /><circle cx="29.500" cy="16.500" r="4.500" /><circle cx="14.500" cy="23.500" r="6.500" /><circle cx="28.500" cy="27.500" r="5.500" /></g>
      </Gallery>
    </div>
    <button className="flex items-center gap-2.5 w-full h-[27px] pl-1 border-t border-[#e1e1e1] text-[#666666]">
      <svg width="17" height="17" viewBox="0 0 17 17" fill="none" stroke="#7f7f7f"><path d="M0.500 0v16.500H17" /><path d="M3 4h2M8 2h2M12 4h2M5 8h2M9 7h2M13 9h2M3 12h2M7 12h2M11 11h2M14 1v2M7 5v2M11 13v2" strokeWidth="1.500" strokeDasharray="1 1" /></svg>
      <span><u>M</u>ore Scatter Charts...</span>
    </button>
  </div>
);

const App: React.FC = () => (
  <div className="relative flex flex-col h-screen overflow-hidden font-['Open_Sans','Noto_Sans',sans-serif]">
    <TitleBar />
    <Ribbon />
    <FormulaBar />
    <Sheet />
    <ScatterMenu />
    <Badge n={1} className="left-[174px] top-[38px]" />
    <Badge n={2} className="left-[600px] top-[106px]" />
    <Badge n={3} className="left-[712px] top-[214px]" />
    <Badge n={4} className="left-[367px] top-[228px]" />
    <Badge n={5} className="left-[1072px] top-[270px]" />
    <Badge n={6} className="left-[712px] top-[297px]" />
    <Badge n={7} className="left-[716px] top-[432px]" />
    <svg className="absolute z-40 left-[728px] top-[260px] w-3 h-5" viewBox="0 0 12 20"><path d="M0.500 1v15l3.500-3.500 2.500 6 2.500-1-2.500-5.500h5z" fill="#fff" stroke="#222" /></svg>
  </div>
);

export default App;
